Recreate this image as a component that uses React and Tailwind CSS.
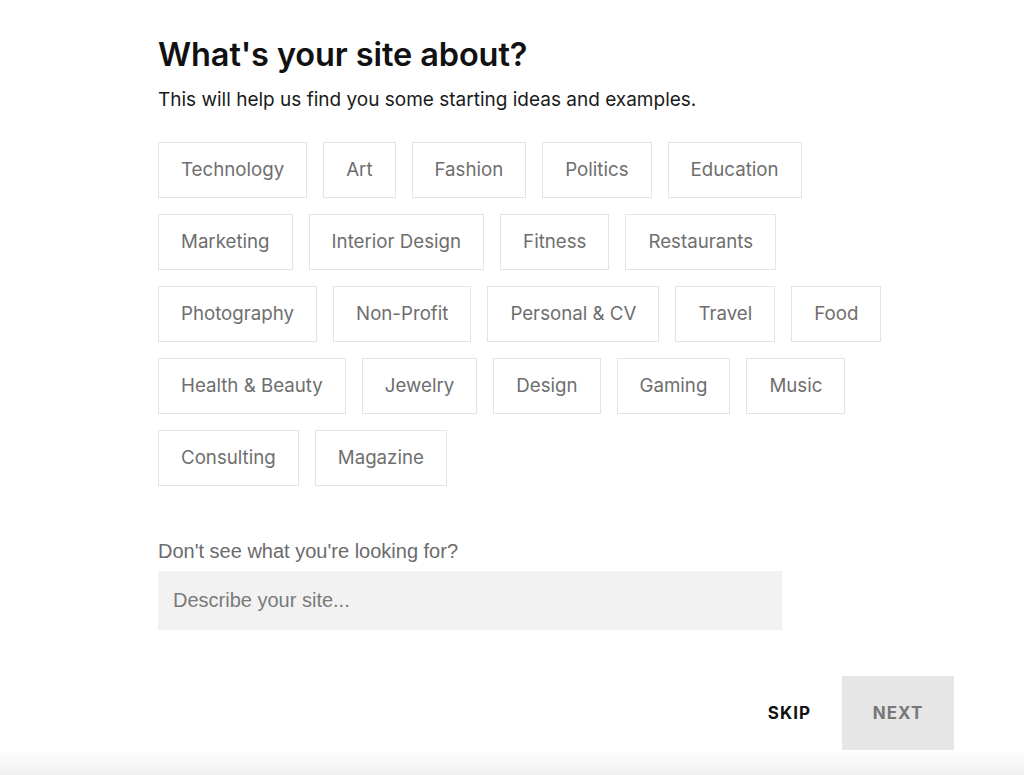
import React, { useState } from 'react';

const topics = [
  'Technology', 'Art', 'Fashion', 'Politics', 'Education',
  'Marketing', 'Interior Design', 'Fitness', 'Restaurants',
  'Photography', 'Non-Profit', 'Personal & CV', 'Travel', 'Food',
  'Health & Beauty', 'Jewelry', 'Design', 'Gaming', 'Music',
  'Consulting', 'Magazine',
];

export default function App() {
  const [picked, setPicked] = useState(null);
  const [desc, setDesc] = useState('');

  return (
    <div className="relative w-full h-[775px] bg-white overflow-hidden" style={{ fontFamily: 'Inter, sans-serif' }}>
      <main className="flex flex-col pl-[158px] pr-[70px] pt-[35px]">
        <h1 className="text-[32.5px] leading-[40px] font-semibold text-[#111] tracking-[-0.1px]">What's your site about?</h1>
        <p className="mt-[13px] text-[19px] leading-[24px] text-[#1a1a1a]">This will help us find you some starting ideas and examples.</p>

        {/* topic chips */}
        <div className="mt-[30px] w-[760px] flex flex-wrap gap-x-[16px] gap-y-[16px]">
          {topics.map((t) => (
            <button
              key={t}
              onClick={() => setPicked(t)}
              className={`h-[56px] px-[22px] border text-[18.7px] text-[#6e6e6e] ${picked === t ? 'border-[#111]' : 'border-[#e4e4e4]'}`}
            >
              {t}
            </button>
          ))}
        </div>

        <label className="mt-[52px] text-[20px] leading-[26px] text-[#6b6b6b]" style={{ fontFamily: '"Liberation Sans", Arial, sans-serif' }}>
          Don't see what you're looking for?
        </label>
        <input
          value={desc}
          onChange={(e) => setDesc(e.target.value)}
          placeholder="Describe your site..."
          className="mt-[7px] w-[624px] h-[59px] bg-[#f2f2f2] px-[15px] text-[20px] text-[#333] placeholder:text-[#7a7a7a] outline-none"
          style={{ fontFamily: '"Liberation Sans", Arial, sans-serif' }}
        />

        <div className="mt-[46px] flex justify-end items-center">
          <button className="text-[17px] font-bold tracking-[1px] text-[#111] mr-[31px] pt-[2px]">SKIP</button>
          <button className="w-[112px] h-[74px] bg-[#e6e6e6] text-[17px] font-bold tracking-[1px] text-[#777] pt-[2px]">NEXT</button>
        </div>
      </main>
      <div className="absolute left-0 right-0 bottom-0 h-[25px] bg-gradient-to-b from-white to-[#efefef]"></div>
    </div>
  );
}
